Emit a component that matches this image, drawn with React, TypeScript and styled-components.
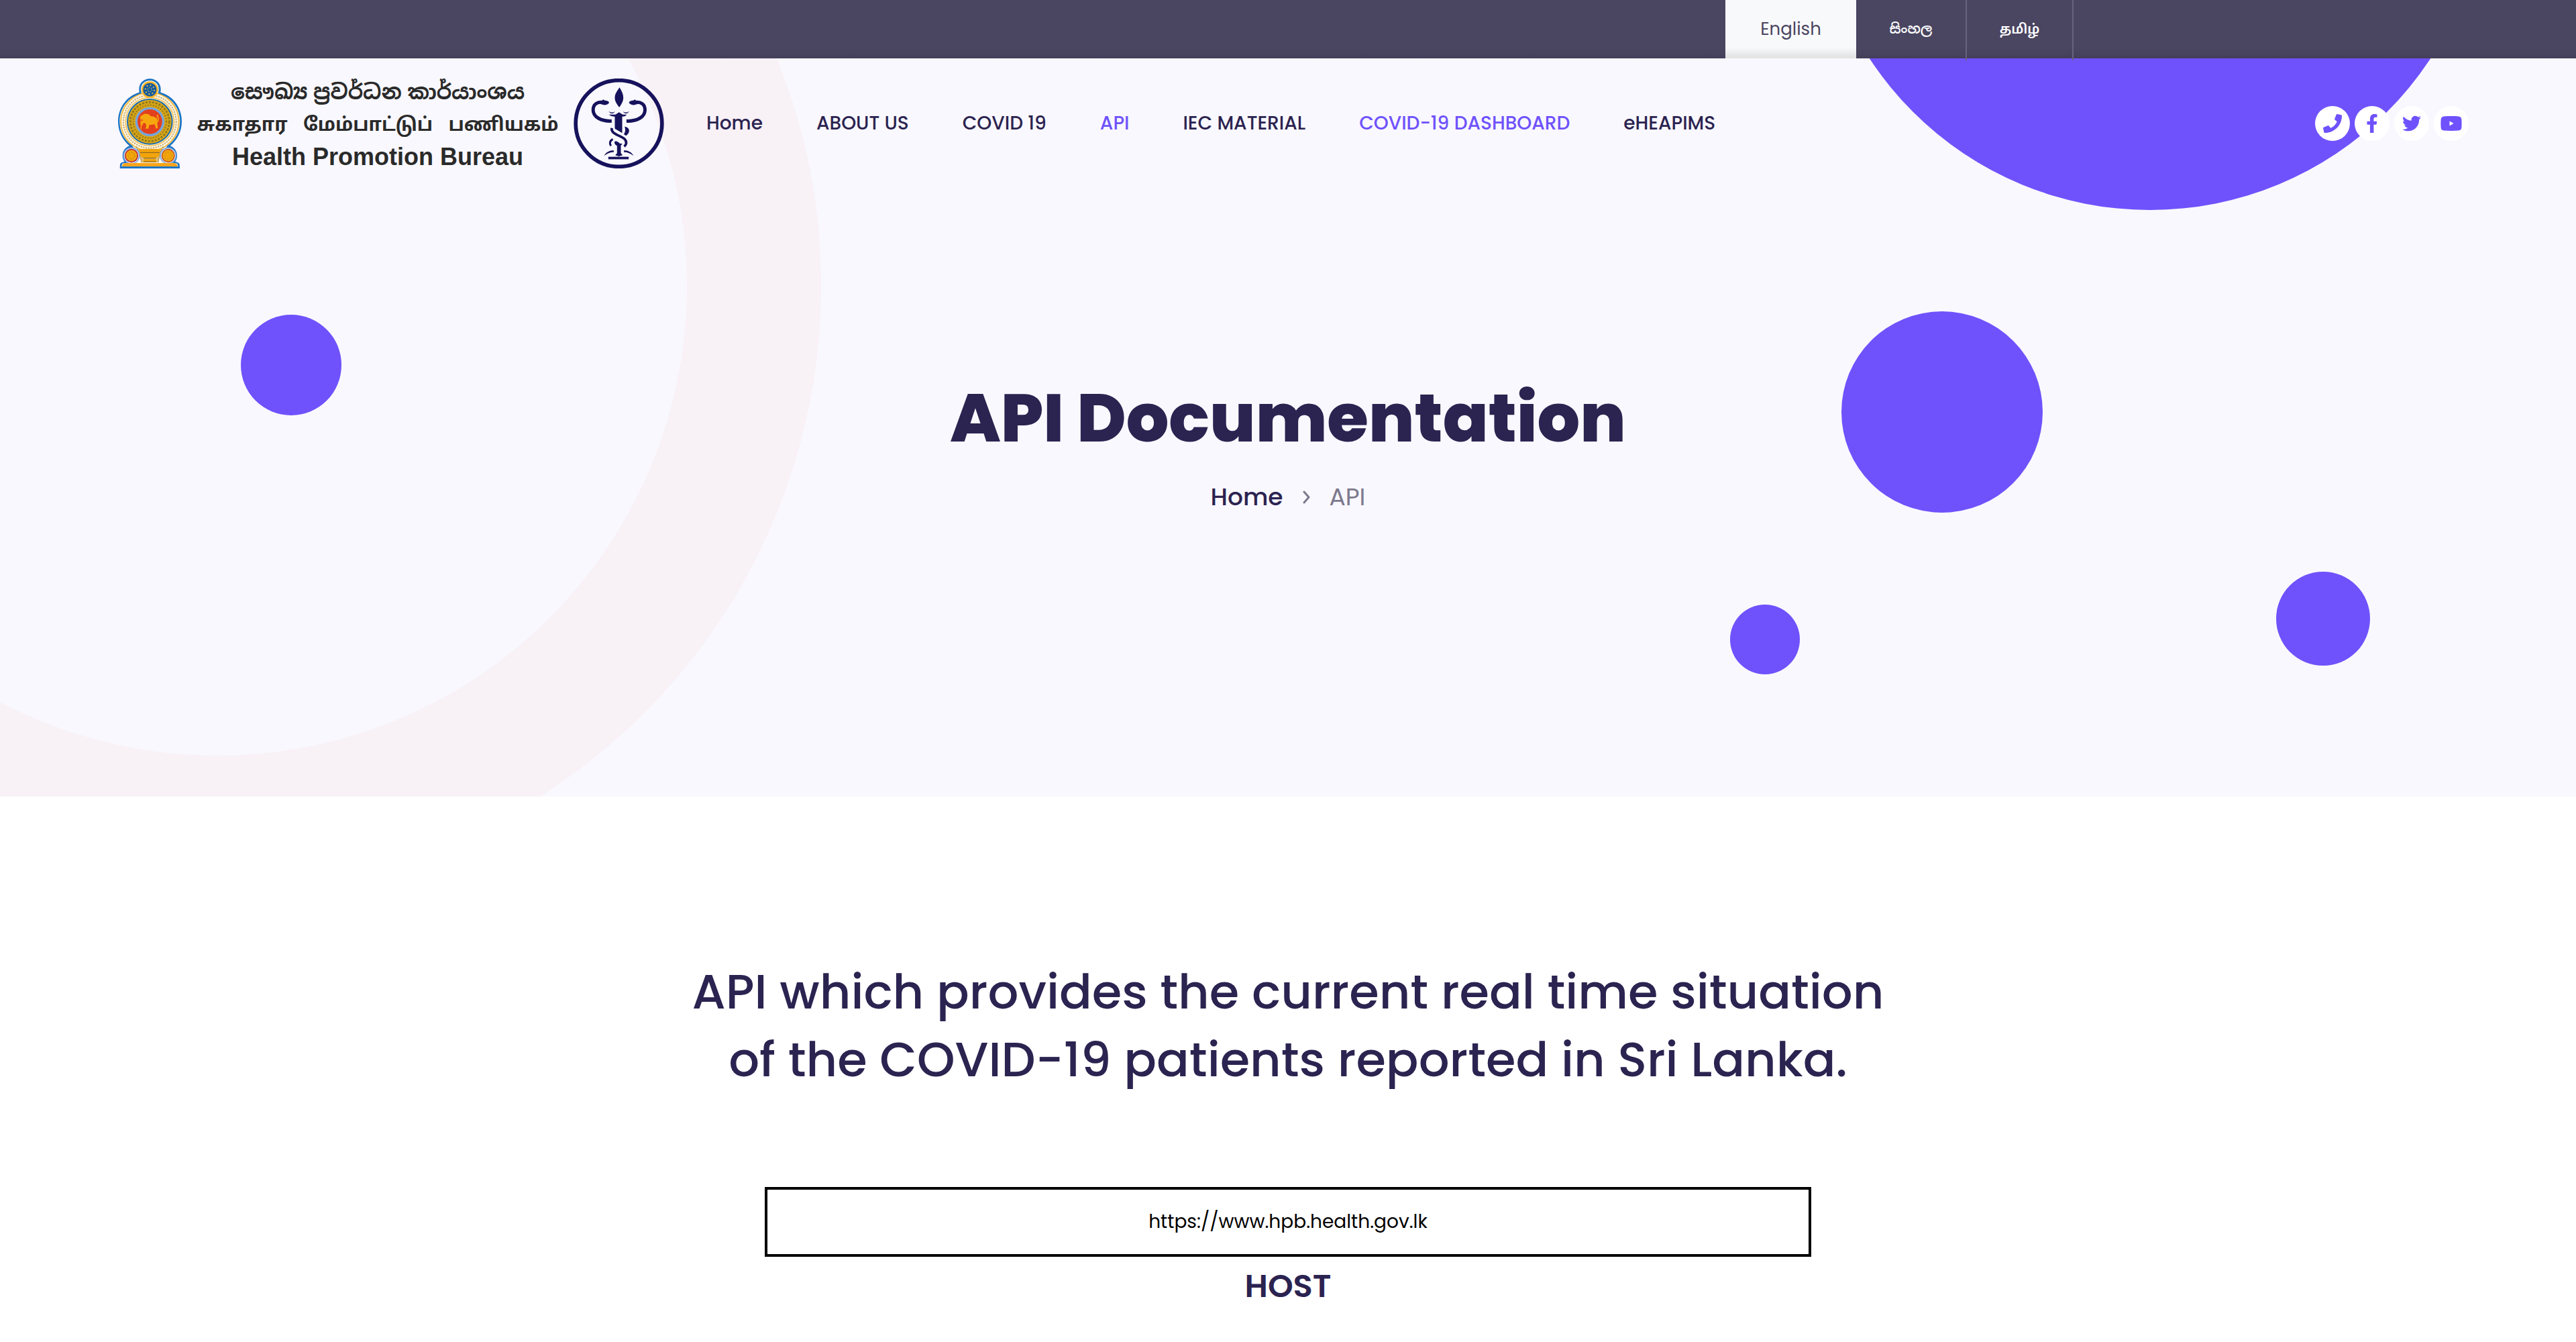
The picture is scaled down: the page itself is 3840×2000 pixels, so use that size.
import React from "react";
import styled, { createGlobalStyle } from "styled-components";
import { FaFacebookF, FaPhone, FaTwitter } from "react-icons/fa";

const color = {
  ink: "#2b2350",
  accent: "#6f52fc",
  bar: "#4a4561",
  hero: "#f9f8fe",
  ring: "#f8f1f6",
  muted: "#7d798d",
};

const sans = `Poppins, Inter, "Noto Sans", "Noto Sans Sinhala", "Noto Sans Tamil", sans-serif`;

const GlobalStyle = createGlobalStyle`
  *, *::before, *::after { box-sizing: border-box; }
  body { margin: 0; background: #fff; color: ${color.ink}; font-family: ${sans}; }
  a { color: inherit; text-decoration: none; }
  h1, h2, h3, p, ul, ol { margin: 0; padding: 0; }
  ul, ol { list-style: none; }
`;

/* ---------- language bar ---------- */

const TopBar = styled.div`
  position: relative;
  z-index: 2;
  height: 87px;
  background: linear-gradient(${color.bar} 71px, #443f59 87px);
`;

const TopBarInner = styled.div`
  max-width: 2342px;
  height: 100%;
  margin: 0 auto;
  display: flex;
  justify-content: flex-end;
`;

const Languages = styled.ul`
  display: grid;
  grid-template-columns: 195px 165px 159px;
`;

const Language = styled.li<{ $active?: boolean }>`
  display: flex;
  color: ${(p) => (p.$active ? color.bar : "#fff")};
  background: ${(p) => (p.$active ? "linear-gradient(#f8f9fb 71px, #e3e4e4 84px)" : "none")};
  border-bottom: ${(p) => (p.$active ? `3px solid ${color.hero}` : "0")};
  border-right: ${(p) => (p.$active ? "0" : "2px solid #67627d")};

  a {
    flex: 1;
    text-align: center;
    font-size: ${(p) => (p.$active ? 26 : 20)}px;
    font-weight: ${(p) => (p.$active ? 400 : 600)};
    line-height: 87px;
  }
`;

/* ---------- hero ---------- */

const Hero = styled.header`
  position: relative;
  overflow: hidden;
  background: ${color.hero};
`;

const Disc = styled.span<{ $size: number; $top: number; $left?: number; $right?: number }>`
  position: absolute;
  top: ${(p) => p.$top}px;
  left: ${(p) => (p.$left === undefined ? "auto" : `${p.$left}px`)};
  right: ${(p) => (p.$right === undefined ? "auto" : `${p.$right}px`)};
  width: ${(p) => p.$size}px;
  height: ${(p) => p.$size}px;
  border-radius: 50%;
  background: ${color.accent};
`;

const Ring = styled(Disc)`
  background: none;
  border: 200px solid ${color.ring};
`;

const NavBar = styled.div`
  position: relative;
  display: flex;
  align-items: center;
  padding: 30px 160px 30px 176px;
`;

const Brand = styled.a`
  display: flex;
  align-items: center;
  gap: 27px;
  height: 134px;
  margin-right: 63px;
`;

const BrandNames = styled.span`
  display: flex;
  flex-direction: column;
  align-items: center;
  width: 530px;
  padding-top: 4px;
  color: #2a2a2a;
  font-weight: 700;
  line-height: 48px;
`;

const BrandName = styled.span<{ $size: number }>`
  height: 48px;
  font-family: "Liberation Sans", "Noto Sans Sinhala", "Noto Sans Tamil", "Noto Sans", sans-serif;
  font-size: ${(p) => p.$size}px;
  white-space: pre;
`;

const Menu = styled.ul`
  display: flex;
  gap: 80px;
  font-size: 28px;
  font-weight: 500;
  line-height: 40px;
  white-space: nowrap;
`;

const MenuLink = styled.a<{ $accent?: boolean }>`
  color: ${(p) => (p.$accent ? color.accent : color.ink)};
`;

const Social = styled.ul`
  display: flex;
  gap: 7px;
  margin-left: auto;
`;

const SocialLink = styled.a`
  display: flex;
  align-items: center;
  justify-content: center;
  width: 52px;
  height: 52px;
  border-radius: 50%;
  background: #fff;
  color: ${color.accent};

  svg {
    width: auto;
    height: 28px;
  }
`;

const HeroText = styled.div`
  position: relative;
  display: flex;
  flex-direction: column;
  align-items: center;
  padding: 282px 0 416px;
`;

const Title = styled.h1`
  font-size: 100px;
  font-weight: 800;
  line-height: 120px;
`;

const Crumbs = styled.ol`
  display: flex;
  align-items: center;
  gap: 29px;
  margin-top: 28px;
  font-size: 36px;
  font-weight: 500;
  line-height: 60px;

  svg { display: block; }
`;

const CurrentCrumb = styled.li`
  color: ${color.muted};
  font-weight: 400;
`;

/* ---------- content ---------- */

const Content = styled.main`
  display: flex;
  flex-direction: column;
  align-items: center;
  padding: 240px 0 60px;
  text-align: center;
`;

const Lead = styled.h2`
  font-size: 72px;
  font-weight: 500;
  line-height: 101px;
`;

const HostBox = styled.p`
  width: 1560px;
  margin-top: 140px;
  padding: 24px;
  border: 4px solid #000;
  color: #000;
  font-size: 28px;
  line-height: 48px;
`;

const HostLabel = styled.h3`
  margin-top: 14px;
  font-size: 48px;
  font-weight: 600;
  line-height: 60px;
`;

/* ---------- drawings ---------- */

const Emblem = () => (
  <svg width="95" height="134" viewBox="78 81 285 402" aria-hidden="true">
    <path
      d="M220 82c-28 0-48 21-48 46 0 8 1 12 1 15-55 15-95 67-95 130 0 45 20 83 51 109-18 6-31 23-31 43 0 11 3 20 9 28-10 2-19 5-20 12l-1 18h268l-1-18c-1-7-10-10-20-12 6-8 9-17 9-28 0-20-13-37-31-43 32-26 52-64 52-109 0-63-40-115-95-130 0-3 1-7 1-15 0-25-21-46-49-46z"
      fill="#1a73c4"
    />
    <path
      d="M220 90c-24 0-40 17-40 38 0 9 2 14 3 21-57 13-98 62-98 124 0 46 22 84 57 108 6 14 14 24 17 34l-10 38-52 8-4 14h254l-4-14-52-8-10-38c3-10 11-20 17-34 35-24 57-62 57-108 0-62-41-111-98-124 1-7 3-12 3-21 0-21-16-38-40-38z"
      fill="#fbf3dc"
    />
    <circle cx="220" cy="274" r="130" fill="none" stroke="#f4b433" strokeWidth="5" />
    <circle cx="220" cy="274" r="118" fill="none" stroke="#c2a877" strokeWidth="6" strokeDasharray="6 5" />
    <circle cx="220" cy="274" r="108" fill="none" stroke="#f0b63c" strokeWidth="4" />
    <circle cx="220" cy="274" r="100" fill="#d9a518" stroke="#1f6da8" strokeWidth="6" />
    <circle cx="220" cy="274" r="87" fill="none" stroke="#8a761c" strokeWidth="8" strokeDasharray="9 6" />
    <circle cx="220" cy="274" r="74" fill="none" stroke="#987d1c" strokeWidth="7" strokeDasharray="6 6" />
    <circle cx="220" cy="274" r="60" fill="#e3401d" stroke="#74a5dd" strokeWidth="10" />
    <path
      d="M188 244c5-6 15-7 21-4 8 0 12 4 14 10 8-2 16 2 22 5 8 3 10 9 9 16 4-1 4-12-2-19-3-5 0-10 6-11-5 6 3 12 3 21 0 8-3 14-8 17l3 25h-11l1-7-6-13c-7 4-15 5-22 3l-4 18h-14l4-8-2-14-7-4-8 5 2 8-9-3-2-12 10-7-2-8-8 2-2-8z"
      fill="#f7a70e"
    />
    <path d="M181 246v62" stroke="#f7a70e" strokeWidth="4" />
    <circle cx="220" cy="131" r="37" fill="#f4b225" />
    <circle cx="220" cy="131" r="30" fill="#12579f" />
    <circle cx="220" cy="131" r="20" fill="none" stroke="#d9c653" strokeWidth="6" strokeDasharray="6 9.7" />
    <circle cx="220" cy="131" r="9" fill="none" stroke="#d9c653" strokeWidth="4" strokeDasharray="4 5.4" />
    <path d="M144 388c20 12 46 20 76 20s56-8 76-20l-34 68h-84z" fill="#dfc07a" />
    <path d="M152 392c12 22 22 40 24 66M288 392c-12 22-22 40-24 66" fill="none" stroke="#fff" strokeWidth="9" />
    <path d="M160 386c12 22 20 42 22 70M280 386c-12 22-20 42-22 70" fill="none" stroke="#a58a5c" strokeWidth="5" strokeDasharray="6 4" />
    <path d="M170 396h100l-6 15h-88zM174 414h92c-2 12-10 20-18 22h-56c-8-2-16-10-18-22zM196 440h48l8 14h-64z" fill="#f2a40b" />
    <path d="M176 412h88M192 437h56M192 453h56" stroke="#7b5716" strokeWidth="3" />
    <g stroke="#b5273a" strokeWidth="5">
      <circle cx="138" cy="426" r="35" fill="#fff" stroke="#74a5dd" strokeWidth="5" />
      <circle cx="302" cy="426" r="35" fill="#fff" stroke="#74a5dd" strokeWidth="5" />
      <circle cx="138" cy="426" r="28" fill="#f2a40b" />
      <circle cx="302" cy="426" r="28" fill="#f2a40b" stroke="#c0562c" />
    </g>
    <circle cx="138" cy="426" r="15" fill="none" stroke="#c9921a" strokeWidth="4" strokeDasharray="7 4" />
    <circle cx="302" cy="426" r="15" fill="none" stroke="#c9921a" strokeWidth="4" strokeDasharray="5 6" />
    <path d="M96 475c0-11 8-16 20-16h208c12 0 20 5 20 16z" fill="#f8a51b" />
    <path d="M88 479h264" stroke="#1a73c4" strokeWidth="8" />
  </svg>
);

const Caduceus = () => (
  <svg width="135" height="134" viewBox="888 81 404 402" aria-hidden="true">
    <circle cx="1090" cy="282" r="193" fill="none" stroke="#17125c" strokeWidth="17" />
    <g fill="#17125c">
      <path d="M1093 121c8 14 17 28 17 46 0 16-8 28-18 43-11-15-20-27-20-43 0-18 12-32 21-46z" />
      <path d="M1091 232l16 10h18c-4 7-11 9-20 9v74l-33-20v-54c-10 0-20-3-27-9h30z" />
      <path d="M1005 182l10-3 5-4 7 4c10 0 19 4 19 9 0 7-13 12-25 11l-16-5z" />
      <path d="M1177 182l-10-3-5-4-7 4c-10 0-19 4-19 9 0 7 13 12 25 11l16-5z" />
      <path d="M1116 296c12 2 20 8 20 18 0 9-6 17-14 23l-10-7c8-10 8-20 4-34z" />
      <path d="M1072 362c8-3 16 3 22 9l12 2-7 8v34l8 9-17 5-16-5 8-9v-33c-9-6-14-12-10-20z" />
      <rect x="1043" y="431" width="91" height="11" />
      <path d="M1024 427c8-16 24-25 43-25v8c-16 0-30 6-43 17zM1156 427c-8-16-24-25-43-25v8c16 0 30 6 43 17z" />
      <path d="M1045 227c8 7 19 8 28 1-6 12-22 13-28-1zM1136 227c-8 7-19 8-28 1 6 12 22 13 28-1z" />
    </g>
    <g fill="none" stroke="#17125c">
      <path d="M1020 188c-26-5-45 8-45 33 0 32 36 52 83 50M1162 188c26-5 45 8 45 33 0 32-36 52-83 50" strokeWidth="15" />
      <path d="M1058 302c-5 38 68 32 65 68-1 6-4 11-9 15" strokeWidth="11" />
      <path d="M1063 352c-14 8-16 20-8 30" strokeWidth="9" />
    </g>
  </svg>
);

const YouTube = () => (
  <svg viewBox="0 0 32 28" fill="currentColor" aria-hidden="true">
    <path
      fillRule="evenodd"
      d="M5 3.4C12 2.8 20 2.8 27 3.4c3 .3 4.200 2.200 4.400 4.600.3 4 .3 8 0 12-.2 2.600-1.400 4.300-4.400 4.600-7 .6-15 .6-22 0C2 24.300.8 22.600.6 20c-.3-4-.3-8 0-12C.8 5.600 2 3.700 5 3.400zM13.500 10.500v7l6.200-3.500z"
    />
  </svg>
);

const Chevron = () => (
  <svg width="11" height="20" viewBox="0 0 11 20" aria-hidden="true">
    <path d="M2 2l7 8-7 8" fill="none" stroke={color.muted} strokeWidth="3" strokeLinecap="round" strokeLinejoin="round" />
  </svg>
);

const menu = [
  { label: "Home" },
  { label: "ABOUT US" },
  { label: "COVID 19" },
  { label: "API", accent: true },
  { label: "IEC MATERIAL" },
  { label: "COVID-19 DASHBOARD", accent: true },
  { label: "eHEAPIMS" },
];

const social = [
  { label: "Phone", Icon: FaPhone },
  { label: "Facebook", Icon: FaFacebookF },
  { label: "Twitter", Icon: FaTwitter },
  { label: "YouTube", Icon: YouTube },
];

export default function App() {
  return (
    <>
      <GlobalStyle />
      <TopBar>
        <TopBarInner>
          <Languages>
            <Language $active><a href="#en">English</a></Language>
            <Language><a href="#si" lang="si">සිංහල</a></Language>
            <Language><a href="#ta" lang="ta">தமிழ்</a></Language>
          </Languages>
        </TopBarInner>
      </TopBar>

      <Hero>
        <Ring $size={1800} $top={-561} $left={-576} />
        <Disc $size={150} $top={382} $left={359} />
        <Disc $size={1000} $top={-774} $right={135} />
        <Disc $size={300} $top={377} $right={795} />
        <Disc $size={104} $top={814} $right={1157} />
        <Disc $size={140} $top={765} $right={307} />

        <NavBar>
          <Brand href="#home" aria-label="Health Promotion Bureau">
            <Emblem />
            <BrandNames>
              <BrandName $size={31} lang="si">සෞඛ්‍ය ප්‍රවර්ධන කාර්යාංශය</BrandName>
              <BrandName $size={28} lang="ta">{"சுகாதார   மேம்பாட்டுப்   பணியகம்"}</BrandName>
              <BrandName $size={36}>Health Promotion Bureau</BrandName>
            </BrandNames>
            <Caduceus />
          </Brand>
          <nav>
            <Menu>
              {menu.map(({ label, accent }) => (
                <li key={label}>
                  <MenuLink href="#" $accent={accent}>{label}</MenuLink>
                </li>
              ))}
            </Menu>
          </nav>
          <Social>
            {social.map(({ label, Icon }) => (
              <li key={label}>
                <SocialLink href="#" aria-label={label}><Icon /></SocialLink>
              </li>
            ))}
          </Social>
        </NavBar>

        <HeroText>
          <Title>API Documentation</Title>
          <Crumbs>
            <li><a href="#home">Home</a></li>
            <li><Chevron /></li>
            <CurrentCrumb>API</CurrentCrumb>
          </Crumbs>
        </HeroText>
      </Hero>

      <Content>
        <Lead>
          API which provides the current real time situation
          <br />
          of the COVID-19 patients reported in Sri Lanka.
        </Lead>
        <HostBox>https://www.hpb.health.gov.lk</HostBox>
        <HostLabel>HOST</HostLabel>
      </Content>
    </>
  );
}
